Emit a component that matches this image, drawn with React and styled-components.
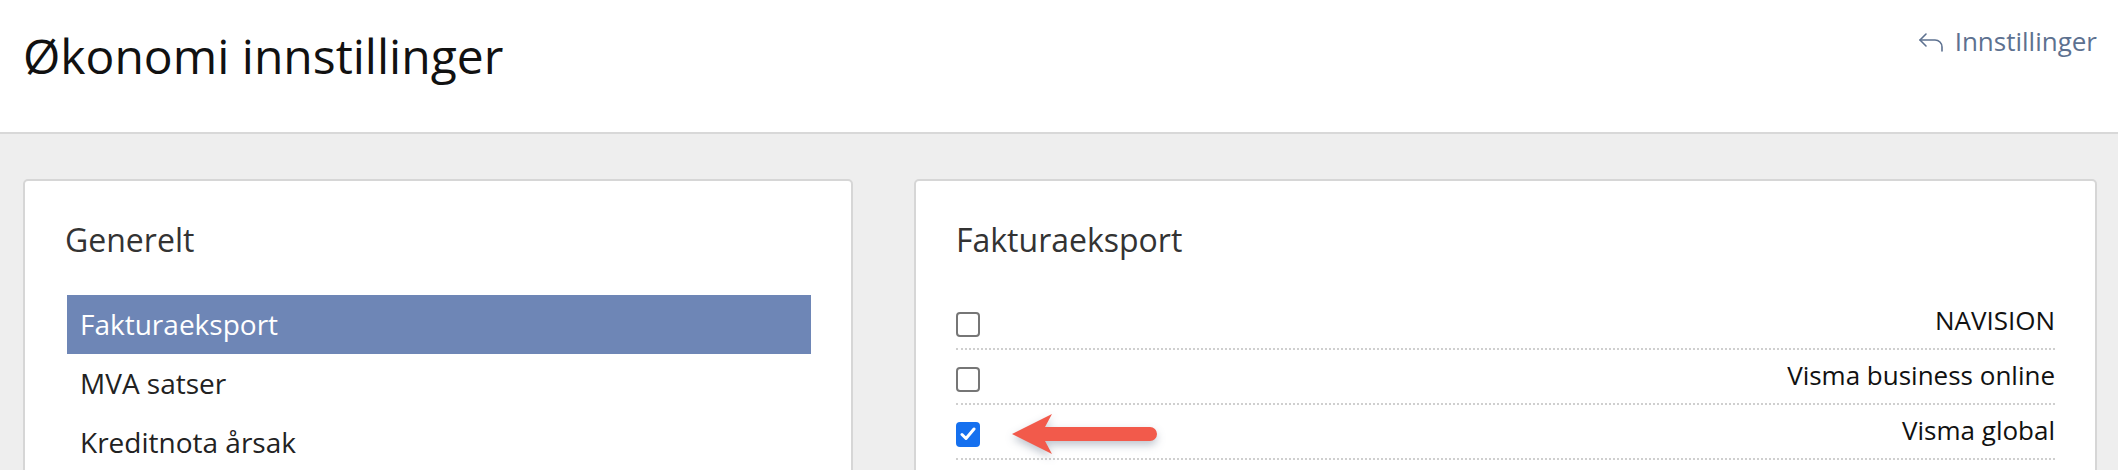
import styled, { createGlobalStyle } from "styled-components";

const GlobalStyle = createGlobalStyle`
  body {
    margin: 0;
    background: #eeeeee;
    font-family: "Open Sans", "Liberation Sans", sans-serif;
  }
`;

const Header = styled.header`
  display: flex;
  justify-content: space-between;
  align-items: flex-start;
  height: 134px;
  padding: 26px 21px 0 23px;
  box-sizing: border-box;
  background: #fff;
  border-bottom: 2px solid #d8d8d8;
`;

const Title = styled.h1`
  margin: 1px 0 0;
  font-size: 48px;
  font-weight: 400;
  line-height: 1.2;
  color: #111;
`;

const BackLink = styled.a`
  display: flex;
  align-items: center;
  gap: 11px;
  font-size: 26px;
  line-height: 1.2;
  color: #5d7190;
  text-decoration: none;
  cursor: pointer;
`;

const Main = styled.main`
  display: grid;
  grid-template-columns: 830px 1183px;
  column-gap: 61px;
  padding: 45px 0 0 23px;
`;

const Card = styled.section`
  background: #fff;
  border: 2px solid #d6d6d6;
  border-radius: 5px;
  padding: 40px;
  min-height: 300px;
`;

const CardTitle = styled.h2`
  margin: 0 0 36px;
  font-size: 32px;
  font-weight: 400;
  line-height: 1.2;
  color: #333;
`;

const Menu = styled.ul`
  list-style: none;
  margin: 0;
  padding: 0;
`;

const MenuItem = styled.li`
  height: 59px;
  line-height: 59px;
  padding-left: 13px;
  margin-left: 2px;
  font-size: 28px;
  color: ${(p) => (p.$active ? "#fff" : "#222")};
  background: ${(p) => (p.$active ? "#6e86b6" : "transparent")};
  cursor: pointer;
`;

const Row = styled.label`
  position: relative;
  display: flex;
  align-items: center;
  justify-content: space-between;
  height: 55px;
  box-sizing: border-box;
  border-bottom: 2px dotted #cfcfcf;
  font-size: 26px;
  color: #111;
`;

const RowLabel = styled.span`
  margin-bottom: 3px;
`;

const Box = styled.span`
  display: flex;
  align-items: center;
  justify-content: center;
  width: 24px;
  height: 25px;
  margin-top: 5px;
  box-sizing: border-box;
  border-radius: 4px;
  border: ${(p) => (p.$checked ? "none" : "2px solid #767676")};
  background: ${(p) => (p.$checked ? "#1570ef" : "#fff")};
`;

const Pointer = styled.svg`
  position: absolute;
  left: 56px;
  top: 9px;
  filter: drop-shadow(0 4px 4px rgba(40, 60, 90, 0.3));
`;

const ReplyIcon = () => (
  <svg width="26" height="20" viewBox="0 0 26 20" fill="none" stroke="#5d7190" strokeWidth="1.6" strokeLinecap="round" strokeLinejoin="round">
    <polyline points="8,2 2,8 8,14" />
    <path d="M2 8 H17 a7 7 0 0 1 7 7 V19" />
  </svg>
);

const Check = () => (
  <svg width="16" height="14" viewBox="0 0 16 14" fill="none" stroke="#fff" strokeWidth="3" strokeLinecap="round" strokeLinejoin="round">
    <polyline points="2,7.5 6,11.5 14,2" />
  </svg>
);

const exports = [
  { name: "NAVISION", checked: false },
  { name: "Visma business online", checked: false },
  { name: "Visma global", checked: true },
];

const menu = ["Fakturaeksport", "MVA satser", "Kreditnota årsak"];

export default function App() {
  return (
    <>
      <GlobalStyle />
      <Header>
        <Title>Økonomi innstillinger</Title>
        <BackLink>
          <ReplyIcon />
          Innstillinger
        </BackLink>
      </Header>
      <Main>
        <Card>
          <CardTitle>Generelt</CardTitle>
          <Menu>
            {menu.map((m, i) => (
              <MenuItem key={m} $active={i === 0}>
                {m}
              </MenuItem>
            ))}
          </Menu>
        </Card>
        <Card>
          <CardTitle>Fakturaeksport</CardTitle>
          {exports.map((e) => (
            <Row key={e.name}>
              <Box $checked={e.checked}>{e.checked && <Check />}</Box>
              <RowLabel>{e.name}</RowLabel>
              {e.checked && (
                <Pointer width="148" height="42" viewBox="0 0 148 42">
                  <path
                    d="M0 20 L40 0 L33 13 L138 13 A7 7 0 0 1 138 27 L33 27 L40 40 Z"
                    fill="#f25a4b"
                  />
                </Pointer>
              )}
            </Row>
          ))}
        </Card>
      </Main>
    </>
  );
}
